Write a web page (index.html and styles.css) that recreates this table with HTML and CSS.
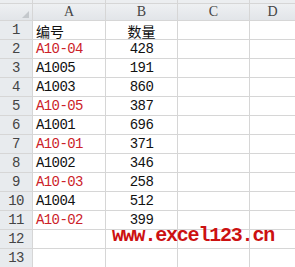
FILE: index.html
```html
<!DOCTYPE html>
<html>
<head>
<meta charset="utf-8">
<link rel="stylesheet" href="styles.css">
</head>
<body>
<div class="sheet">
  <div class="strip"></div><div class="strip"></div><div class="strip"></div><div class="strip"></div><div class="strip"></div>

  <div class="hd corner"><span class="tri"></span></div>
  <div class="hd col">A</div><div class="hd col">B</div><div class="hd col">C</div><div class="hd col">D</div>

  <div class="hd rn">1</div><div class="c a cjk">编号</div><div class="c b cjk">数量</div><div class="c"></div><div class="c"></div>
  <div class="hd rn">2</div><div class="c a red">A10-04</div><div class="c b">428</div><div class="c"></div><div class="c"></div>
  <div class="hd rn">3</div><div class="c a">A1005</div><div class="c b">191</div><div class="c"></div><div class="c"></div>
  <div class="hd rn">4</div><div class="c a">A1003</div><div class="c b">860</div><div class="c"></div><div class="c"></div>
  <div class="hd rn">5</div><div class="c a red">A10-05</div><div class="c b">387</div><div class="c"></div><div class="c"></div>
  <div class="hd rn">6</div><div class="c a">A1001</div><div class="c b">696</div><div class="c"></div><div class="c"></div>
  <div class="hd rn">7</div><div class="c a red">A10-01</div><div class="c b">371</div><div class="c"></div><div class="c"></div>
  <div class="hd rn">8</div><div class="c a">A1002</div><div class="c b">346</div><div class="c"></div><div class="c"></div>
  <div class="hd rn">9</div><div class="c a red">A10-03</div><div class="c b">258</div><div class="c"></div><div class="c"></div>
  <div class="hd rn">10</div><div class="c a">A1004</div><div class="c b">512</div><div class="c"></div><div class="c"></div>
  <div class="hd rn">11</div><div class="c a red">A10-02</div><div class="c b">399</div><div class="c"></div><div class="c"></div>
  <div class="hd rn">12</div><div class="c"></div><div class="c"></div><div class="c"></div><div class="c"></div>
  <div class="hd rn">13</div><div class="c"></div><div class="c"></div><div class="c"></div><div class="c"></div>

  <div class="mark">www.excel123.cn</div>
</div>
</body>
</html>
```

FILE: styles.css
```css
html, body {
  margin: 0;
  padding: 0;
  background: #ffffff;
  overflow: hidden;
}

.sheet {
  position: relative;
  width: 295px;
  height: 267px;
  display: grid;
  grid-template-columns: 32px 72px 71px 71px 1fr;
  grid-template-rows: 3px 16px repeat(13, 18px);
  gap: 1px;
  background: #d6d6d6;
  font-family: "Liberation Mono", "DejaVu Sans Mono", monospace;
  font-size: 14px;
  letter-spacing: -0.6px;
}

.strip {
  background: #eceef0;
}

.hd {
  background: linear-gradient(#eef0f2, #e2e5e9);
  color: #3a3a3a;
  display: flex;
  align-items: flex-end;
  justify-content: center;
  line-height: 1;
}

.col {
  padding-bottom: 1px;
  font-family: "Liberation Serif", serif;
  letter-spacing: 0;
  font-size: 14px;
  color: #444;
}

.rn {
  background: #e8ebee;
  padding-bottom: 2px;
  font-size: 14px;
  color: #444;
}

.corner {
  justify-content: flex-end;
  padding: 0 3px 2px 0;
}

.tri {
  width: 0;
  height: 0;
  border-left: 7px solid transparent;
  border-bottom: 7px solid #c4c8cc;
}

.c {
  background: #ffffff;
  color: #111;
  display: flex;
  align-items: flex-end;
  line-height: 1;
  padding-bottom: 2px;
  white-space: nowrap;
}

.a {
  padding-left: 3px;
}

.b {
  justify-content: center;
}

.cjk {
  font-family: "Noto Sans CJK SC", sans-serif;
  letter-spacing: 0;
  font-size: 14px;
  padding-bottom: 1px;
}

.red {
  color: #cc2229;
}

.mark {
  position: absolute;
  left: 112px;
  top: 226px;
  font-family: "Liberation Mono", monospace;
  font-weight: bold;
  font-size: 20px;
  letter-spacing: -1.2px;
  color: #cc1111;
  line-height: 1;
}
```
